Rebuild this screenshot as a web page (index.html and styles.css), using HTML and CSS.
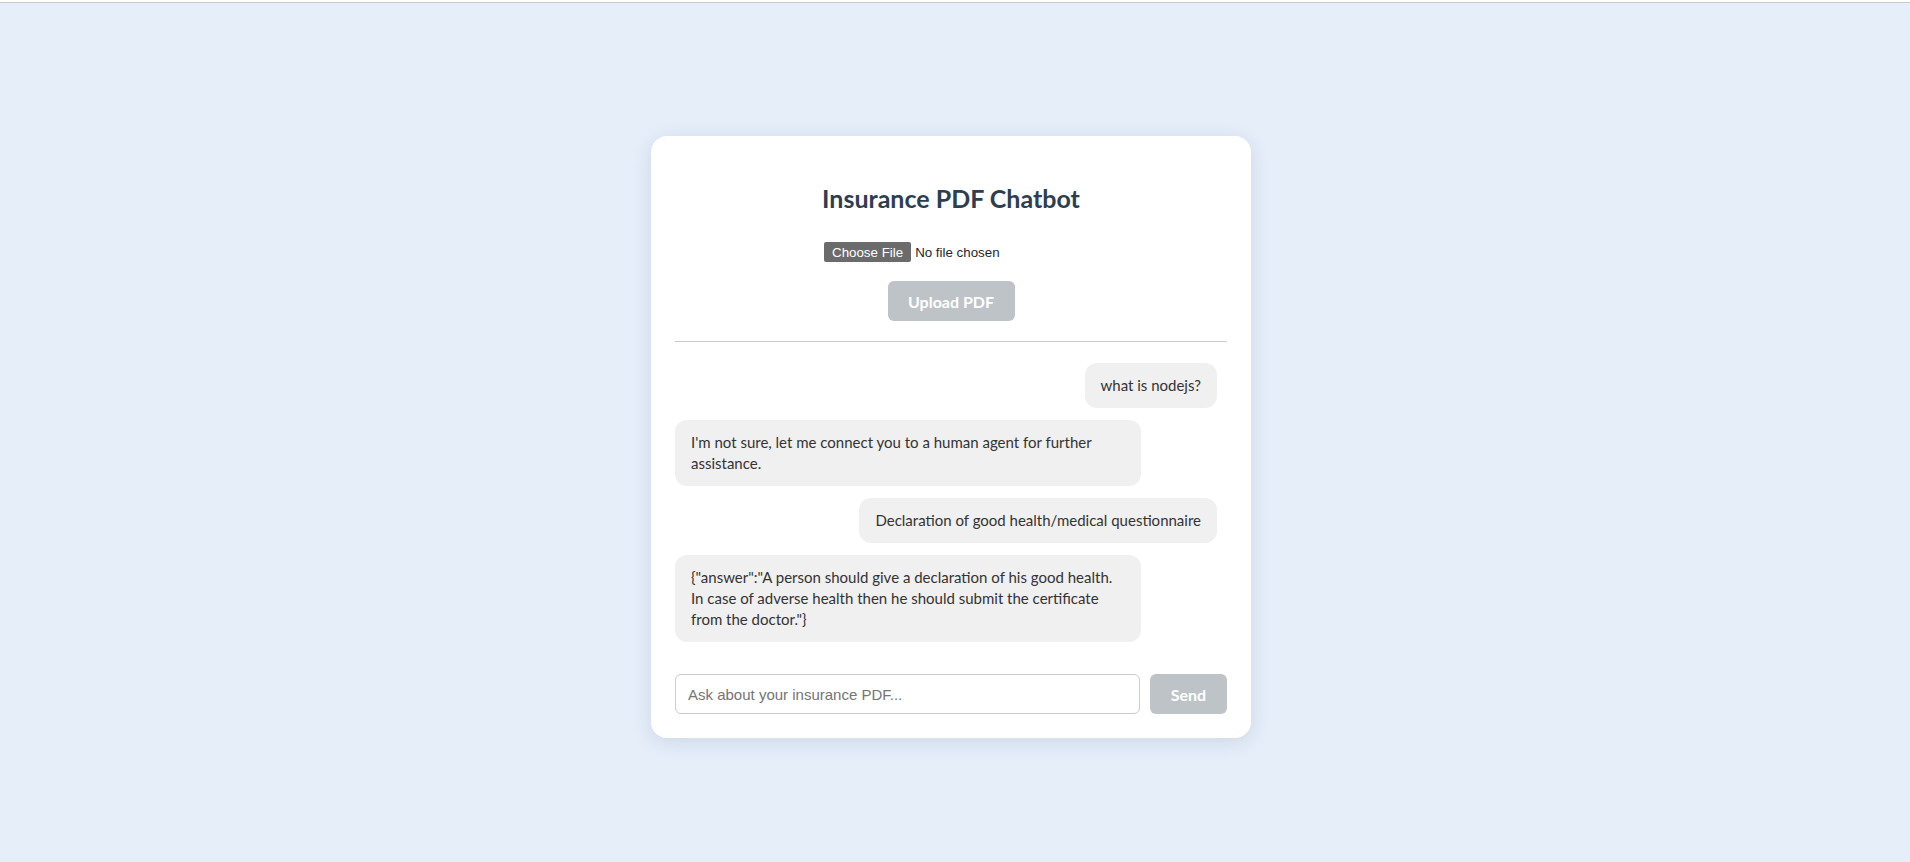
FILE: index.html
```html
<!DOCTYPE html>
<html lang="en">
<head>
<meta charset="utf-8">
<title>Insurance PDF Chatbot</title>
<link rel="stylesheet" href="styles.css">
</head>
<body>
<div class="topline"></div>
<main class="page">
  <section class="card">
    <h1 class="title">Insurance PDF Chatbot</h1>
    <div class="upload">
      <input class="file-input" type="file" accept="application/pdf">
      <button class="btn btn-upload" type="button">Upload PDF</button>
    </div>
    <hr class="divider">
    <div class="messages">
      <div class="bubble user">what is nodejs?</div>
      <div class="bubble bot">I'm not sure, let me connect you to a human agent for further assistance.</div>
      <div class="bubble user">Declaration of good health/medical questionnaire</div>
      <div class="bubble bot">{"answer":"A person should give a declaration of his good health. In case of adverse health then he should submit the certificate from the doctor."}</div>
    </div>
    <form class="composer">
      <input class="ask" type="text" placeholder="Ask about your insurance PDF...">
      <button class="btn btn-send" type="button">Send</button>
    </form>
  </section>
</main>
</body>
</html>
```
FILE: styles.css
```css
* { box-sizing: border-box; }

html, body {
  margin: 0;
  padding: 0;
  height: 100%;
}

body {
  background: #e5eef9;
  font-family: Lato, "Open Sans", sans-serif;
  color: #333;
  overflow: hidden;
}

.topline {
  height: 3px;
  background: #ffffff;
  border-bottom: 1px solid #c7c9cc;
}

.page {
  height: calc(100% - 3px);
  display: flex;
  justify-content: center;
  align-items: center;
  padding: 9px 8px 0 0;
}

.card {
  width: 600px;
  background: #ffffff;
  border-radius: 16px;
  box-shadow: 0 4px 20px rgba(40, 60, 90, 0.12);
  padding: 24px;
  display: flex;
  flex-direction: column;
}

.title {
  margin: 22px 0 28px;
  font-size: 25px;
  line-height: 32px;
  font-weight: 700;
  color: #2c3e50;
  text-align: center;
}

.upload {
  display: flex;
  flex-direction: column;
  align-items: center;
}

.file-input {
  width: 254px;
  height: 21px;
  font-family: "Liberation Sans", Arial, sans-serif;
  font-size: 13.33px;
  color: #1f2630;
}

.file-input::file-selector-button {
  font-family: "Liberation Sans", Arial, sans-serif;
  font-size: 13.33px;
  height: 20px;
  padding: 0 8px;
  margin-right: 4px;
  background: #6b6b6b;
  color: #ffffff;
  border: none;
  border-radius: 2px;
}

.btn {
  border: none;
  background: #bdc3c7;
  color: #ffffff;
  font-family: Lato, "Open Sans", sans-serif;
  font-weight: 700;
  font-size: 16px;
  border-radius: 6px;
  height: 40px;
  cursor: not-allowed;
}

.btn-upload {
  margin-top: 18px;
  width: 127px;
}

.divider {
  margin: 20px 0 0;
  border: none;
  border-top: 1px solid #cccccc;
}

.messages {
  display: flex;
  flex-direction: column;
  gap: 12px;
  padding: 21px 10px 0 0;
}

.bubble {
  background: #f0f0f0;
  border-radius: 12px;
  padding: 12px 16px;
  font-size: 15px;
  line-height: 21px;
  color: #333;
  max-width: 466px;
}

.user {
  align-self: flex-end;
}

.bot {
  align-self: flex-start;
  width: 466px;
}

.composer {
  display: flex;
  gap: 10px;
  margin: 32px 0 0;
}

.ask {
  flex: 1;
  height: 40px;
  padding: 0 12px;
  border: 1px solid #cccccc;
  border-radius: 6px;
  font-family: "Liberation Sans", Arial, sans-serif;
  font-size: 15px;
  color: #333;
  outline: none;
}

.ask::placeholder {
  color: #757575;
}

.btn-send {
  width: 77px;
}
```
